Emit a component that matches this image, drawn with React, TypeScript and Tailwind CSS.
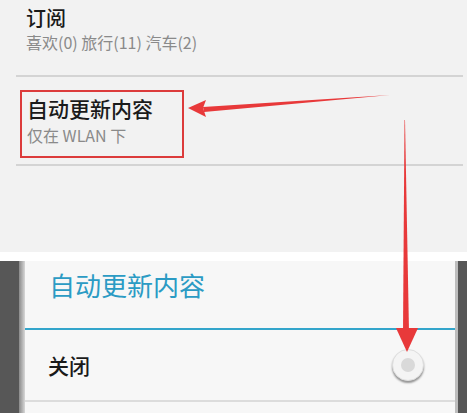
import React from "react";

export default function App() {
  const font = { fontFamily: '"Noto Sans CJK SC", "Noto Sans", sans-serif' };
  return (
    <div className="relative w-[467px] h-[413px] overflow-hidden bg-[#f2f2f2]" style={font}>
      {/* Top settings list */}
      <div className="h-[252px] bg-[#f2f2f2] flex flex-col">
        <div className="pl-[26px] pt-[5px] h-[75px]">
          <div className="text-[20px] leading-[26px] font-medium text-[#1a1a1a]">订阅</div>
          <div className="text-[16px] leading-[20px] mt-[1px] text-[#8a8a8a]">喜欢(0) 旅行(11) 汽车(2)</div>
        </div>
        <div className="ml-[16px] mr-[4px] h-[2px] bg-[#d4d4d4]" />
        <div className="pl-[20px] pt-[13px] h-[87px]">
          <div className="w-[164px] h-[68px] border-2 border-[#dc3b3b] pl-[5px] pt-[3px]">
            <div className="text-[21px] leading-[27px] font-medium text-[#1a1a1a]">自动更新内容</div>
            <div className="text-[16px] leading-[20px] mt-[3px] text-[#8a8a8a]">仅在 WLAN 下</div>
          </div>
        </div>
        <div className="ml-[16px] mr-[4px] h-[2px] bg-[#d4d4d4]" />
      </div>
      <div className="h-[9px] bg-white" />
      {/* Dialog area */}
      <div className="h-[152px] bg-[#575757] flex">
        <div className="w-[19px]" />
        <div className="w-[6px] bg-gradient-to-r from-[#8a8a8a] to-[#d8d8d8]" />
        <div className="w-[430px] bg-[#f7f7f7] flex flex-col">
          <div className="h-[67px] pl-[24px] pt-[6px] text-[26px] leading-[36px] text-[#2b9bc4]">自动更新内容</div>
          <div className="h-[2px] bg-[#33a5cb]" />
          <div className="h-[70px] flex items-center justify-between pl-[23px] pr-[31px]">
            <div className="text-[21px] leading-[26px] font-medium text-[#1a1a1a]">关闭</div>
            <div className="w-[32px] h-[32px] rounded-full bg-[#f4f4f4] shadow-[0_2px_2px_rgba(0,0,0,0.4)] border border-[#dedede] flex items-center justify-center">
              <div className="w-[14px] h-[14px] rounded-full bg-[#d9d9d9]" />
            </div>
          </div>
          <div className="h-[2px] bg-[#dcdcdc]" />
        </div>
        <div className="w-[3px] bg-[#bdbdbd]" />
      </div>
      {/* Red annotation arrows */}
      <svg className="absolute left-0 top-0 pointer-events-none" width="467" height="413" viewBox="0 0 467 413">
        <polygon points="390,95 203,107 204,112" fill="#e8393a" />
        <polygon points="188,108 206,100 203,108 206,117" fill="#e8393a" />
        <polygon points="405,120 404.5,120 403,332 409,332" fill="#e8393a" />
        <polygon points="396,328 418,328 407,352" fill="#e8393a" />
      </svg>
    </div>
  );
}
